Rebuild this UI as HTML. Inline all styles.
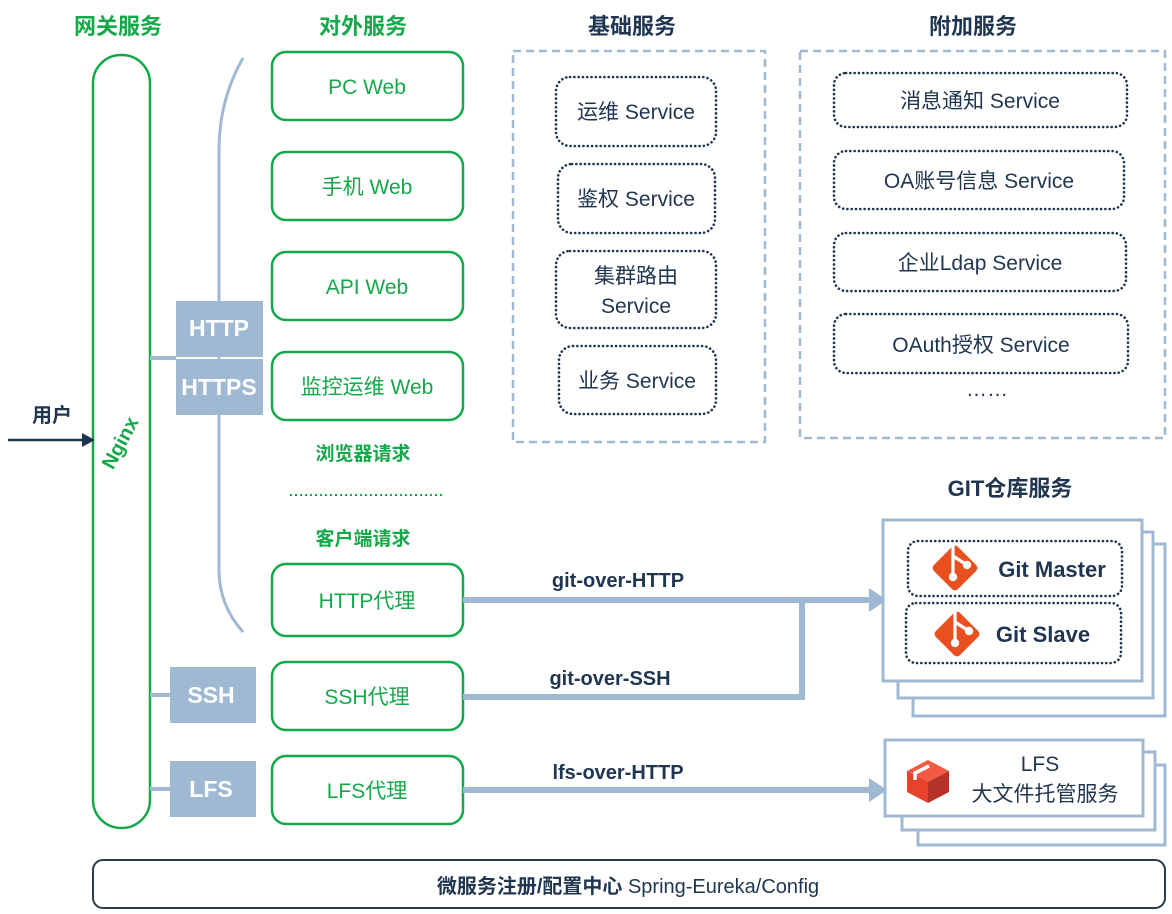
<!DOCTYPE html>
<html><head><meta charset="utf-8"><style>
html,body{margin:0;padding:0;background:#fff;}
svg{display:block;}
text{font-family:"Liberation Sans","Noto Sans CJK SC",sans-serif;}
.g{fill:#14a84a;font-weight:bold;font-size:22px;}
.h{fill:#1f3550;font-weight:bold;font-size:22px;}
.w{fill:#14a84a;font-size:21px;}
.s{fill:#1f3550;font-size:21px;}
.gb{fill:none;stroke:#14a84a;stroke-width:2.5;}
.dt{fill:none;stroke:#1f3550;stroke-width:2.6;stroke-dasharray:0.1 4.2;stroke-linecap:round;}
.bl{fill:#a0b9d3;}
.lab{fill:#fff;font-weight:bold;font-size:23px;}
.ar{fill:#1f3550;font-weight:bold;font-size:20px;}
</style></head><body>
<svg width="1172" height="914" viewBox="0 0 1172 914" xmlns="http://www.w3.org/2000/svg">
<text class="g" x="118" y="34" text-anchor="middle">网关服务</text>
<text class="g" x="363" y="34" text-anchor="middle">对外服务</text>
<text class="h" x="632" y="34" text-anchor="middle">基础服务</text>
<text class="h" x="973" y="34" text-anchor="middle">附加服务</text>
<text class="h" x="1010" y="496" text-anchor="middle">GIT仓库服务</text>

<rect x="93" y="55" width="57" height="773" rx="28" class="gb"/>
<text x="126" y="446" transform="rotate(-62 126 446)" text-anchor="middle" style="fill:#14a84a;font-weight:bold;font-size:20px">Nginx</text>
<line x1="8" y1="440" x2="84" y2="440" stroke="#1f3550" stroke-width="2.5"/>
<polygon points="82,433 95,440 82,447" fill="#1f3550"/>
<text x="52" y="422" text-anchor="middle" style="fill:#1f3550;font-weight:bold;font-size:20px">用户</text>

<path d="M243,58 Q219,100 219,150 L219,570 Q219,605 243,632" fill="none" stroke="#a0b9d3" stroke-width="3"/>
<line x1="150" y1="358" x2="176" y2="358" stroke="#a0b9d3" stroke-width="4"/>
<rect class="bl" x="176" y="301" width="87" height="56"/>
<rect class="bl" x="176" y="359" width="87" height="56"/>
<text class="lab" x="219" y="336" text-anchor="middle">HTTP</text>
<text class="lab" x="219" y="395" text-anchor="middle">HTTPS</text>
<line x1="150" y1="695" x2="170" y2="695" stroke="#a0b9d3" stroke-width="4"/>
<rect class="bl" x="170" y="667" width="86" height="56"/>
<text class="lab" x="211" y="703" text-anchor="middle">SSH</text>
<line x1="150" y1="789" x2="170" y2="789" stroke="#a0b9d3" stroke-width="4"/>
<rect class="bl" x="170" y="761" width="86" height="56"/>
<text class="lab" x="211" y="797" text-anchor="middle">LFS</text>

<rect x="272" y="52" width="191" height="68" rx="14" class="gb"/><text class="w" x="367" y="94" text-anchor="middle">PC Web</text>
<rect x="272" y="152" width="191" height="68" rx="14" class="gb"/><text class="w" x="367" y="194" text-anchor="middle">手机 Web</text>
<rect x="272" y="252" width="191" height="68" rx="14" class="gb"/><text class="w" x="367" y="294" text-anchor="middle">API Web</text>
<rect x="272" y="352" width="191" height="68" rx="14" class="gb"/><text class="w" x="367" y="394" text-anchor="middle">监控运维 Web</text>
<text x="363" y="460" text-anchor="middle" style="fill:#14a84a;font-weight:bold;font-size:19px">浏览器请求</text>
<line x1="290" y1="495" x2="442" y2="495" stroke="#14a84a" stroke-width="2" stroke-dasharray="2 3"/>
<text x="363" y="545" text-anchor="middle" style="fill:#14a84a;font-weight:bold;font-size:19px">客户端请求</text>
<rect x="272" y="564" width="191" height="72" rx="14" class="gb"/><text class="w" x="367" y="608" text-anchor="middle">HTTP代理</text>
<rect x="272" y="662" width="191" height="68" rx="14" class="gb"/><text class="w" x="367" y="704" text-anchor="middle">SSH代理</text>
<rect x="272" y="756" width="191" height="68" rx="14" class="gb"/><text class="w" x="367" y="798" text-anchor="middle">LFS代理</text>

<rect x="513" y="51" width="252" height="391" fill="none" stroke="#a0b9d3" stroke-width="2.5" stroke-dasharray="8 5"/>
<rect x="556" y="77" width="160" height="69" rx="14" class="dt"/><text class="s" x="636" y="119" text-anchor="middle">运维 Service</text>
<rect x="558" y="164" width="157" height="69" rx="14" class="dt"/><text class="s" x="636" y="206" text-anchor="middle">鉴权 Service</text>
<rect x="556" y="251" width="160" height="77" rx="14" class="dt"/><text class="s" x="636" y="283" text-anchor="middle">集群路由</text><text class="s" x="636" y="313" text-anchor="middle">Service</text>
<rect x="559" y="346" width="157" height="68" rx="14" class="dt"/><text class="s" x="637" y="388" text-anchor="middle">业务 Service</text>

<rect x="800" y="51" width="365" height="387" fill="none" stroke="#a0b9d3" stroke-width="2.5" stroke-dasharray="8 5"/>
<rect x="834" y="73" width="293" height="54" rx="12" class="dt"/><text class="s" x="980" y="108" text-anchor="middle">消息通知 Service</text>
<rect x="834" y="151" width="290" height="58" rx="12" class="dt"/><text class="s" x="979" y="188" text-anchor="middle">OA账号信息 Service</text>
<rect x="834" y="233" width="292" height="58" rx="12" class="dt"/><text class="s" x="980" y="270" text-anchor="middle">企业Ldap Service</text>
<rect x="834" y="314" width="294" height="59" rx="12" class="dt"/><text class="s" x="981" y="352" text-anchor="middle">OAuth授权 Service</text>
<text class="s" x="987" y="396" text-anchor="middle">……</text>

<g fill="#a0b9d3">
<rect x="463" y="597" width="408" height="6"/>
<polygon points="869,588 887,600 869,612"/>
<rect x="463" y="694" width="342" height="6"/>
<rect x="799" y="597" width="6" height="103"/>
<rect x="463" y="787" width="408" height="6"/>
<polygon points="869,778 887,790 869,802"/>
</g>
<text class="ar" x="618" y="587" text-anchor="middle">git-over-HTTP</text>
<text class="ar" x="610" y="685" text-anchor="middle">git-over-SSH</text>
<text class="ar" x="618" y="779" text-anchor="middle">lfs-over-HTTP</text>

<g fill="#fff" stroke="#a0b9d3" stroke-width="3">
<rect x="913" y="544" width="252" height="172"/>
<rect x="898" y="532" width="255" height="166"/>
<rect x="883" y="520" width="259" height="161"/>
<rect x="918" y="765" width="247" height="80"/>
<rect x="902" y="752" width="253" height="78"/>
<rect x="885" y="740" width="258" height="76"/>
</g>
<rect x="908" y="541" width="214" height="55" rx="10" class="dt"/>
<rect x="906" y="603" width="215" height="60" rx="10" class="dt"/>
<g id="gi" transform="translate(955,568)">
<rect x="-17" y="-17" width="34" height="34" rx="4" fill="#e8501f" transform="rotate(45)"/>
<path d="M-2,-23 L-2,9 M-2,-12 L12,-3" stroke="#fff" stroke-width="3.2" fill="none"/>
<circle cx="-2" cy="9" r="4.2" fill="#fff"/><circle cx="12" cy="-3" r="4.2" fill="#fff"/>
</g>
<g transform="translate(2,66)"><use href="#gi"/></g>
<text x="1052" y="577" text-anchor="middle" style="fill:#1f3550;font-weight:bold;font-size:22px">Git Master</text>
<text x="1043" y="642" text-anchor="middle" style="fill:#1f3550;font-weight:bold;font-size:22px">Git Slave</text>

<g>
<polygon points="907,771 928,760 949,771 928,782" fill="#f25a43"/>
<polygon points="907,771 928,782 928,803 907,792" fill="#e8412c"/>
<polygon points="928,782 949,771 949,792 928,803" fill="#b53326"/>
<path d="M915,780 L915,773 L929,766" stroke="#fff" stroke-width="3.5" fill="none"/>
</g>
<text class="s" x="1040" y="771" text-anchor="middle">LFS</text>
<text class="s" x="1045" y="801" text-anchor="middle">大文件托管服务</text>

<rect x="93" y="860" width="1072" height="48" rx="10" fill="none" stroke="#2a3b4f" stroke-width="2"/>
<text x="628" y="893" text-anchor="middle" style="fill:#1f3550;font-size:20px"><tspan font-weight="bold">微服务注册/配置中心</tspan> Spring-Eureka/Config</text>
</svg>
</body></html>
